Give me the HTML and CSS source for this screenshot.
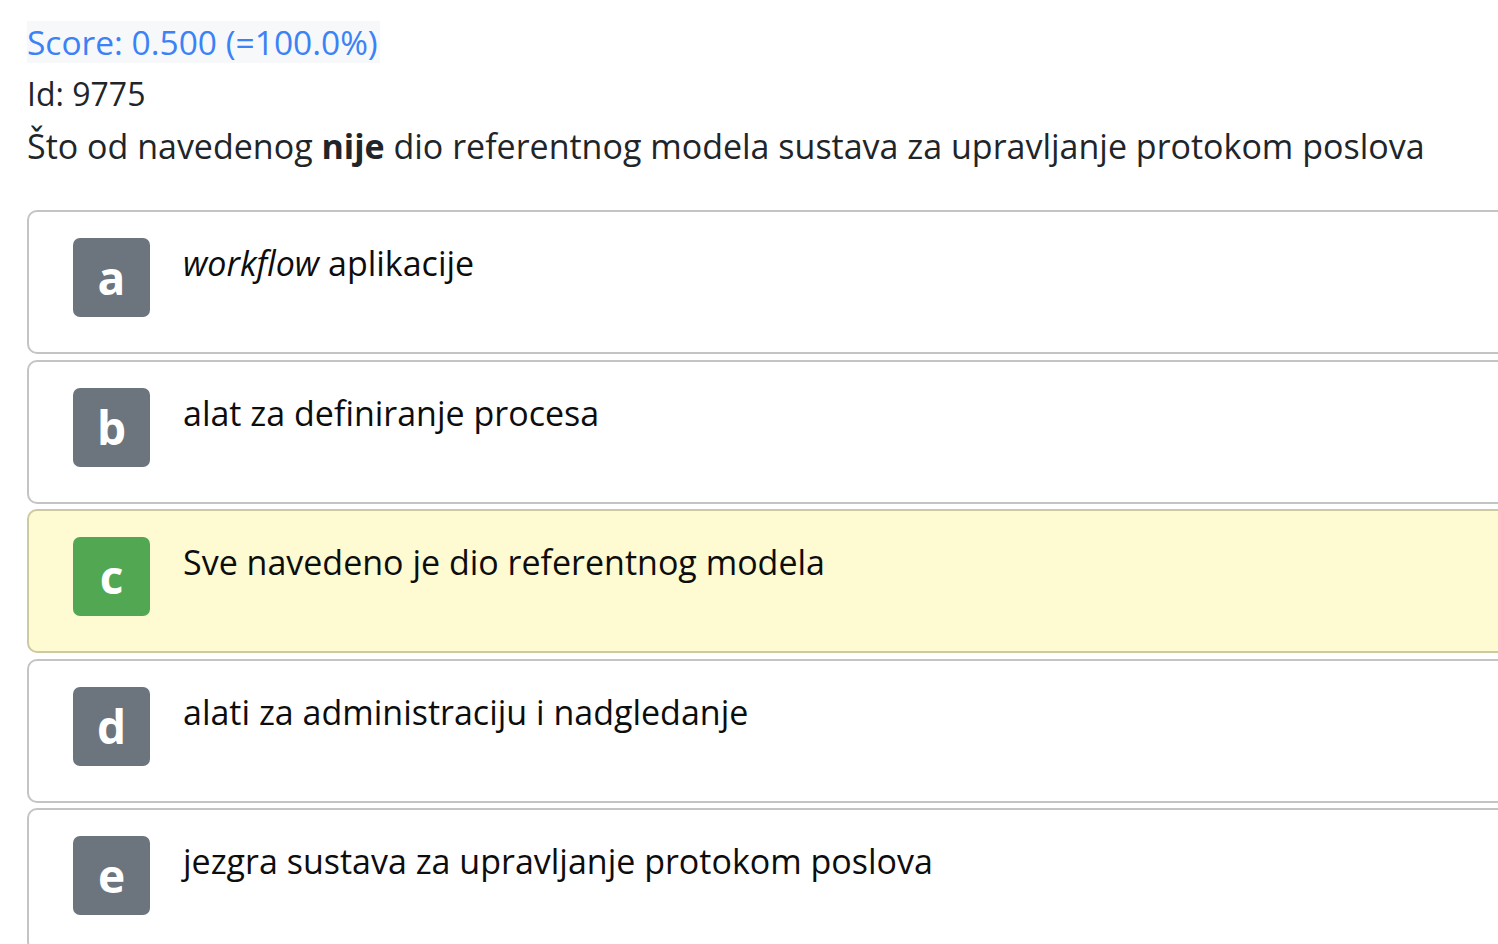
FILE: index.html
```html
<!DOCTYPE html>
<html lang="hr">
<head>
<meta charset="utf-8">
<title>Pitanje 9775</title>
<link rel="stylesheet" href="styles.css">
</head>
<body>
<main class="page">
  <div class="score">Score: 0.500 (=100.0%)</div>
  <div class="qid">Id: 9775</div>
  <div class="question">Što od navedenog <b>nije</b> dio referentnog modela sustava za upravljanje protokom poslova</div>
  <ul class="options">
    <li class="option"><span class="badge">a</span><span class="text"><i>workflow</i> aplikacije</span></li>
    <li class="option"><span class="badge">b</span><span class="text">alat za definiranje procesa</span></li>
    <li class="option option-correct"><span class="badge badge-correct">c</span><span class="text">Sve navedeno je dio referentnog modela</span></li>
    <li class="option"><span class="badge">d</span><span class="text">alati za administraciju i nadgledanje</span></li>
    <li class="option"><span class="badge">e</span><span class="text">jezgra sustava za upravljanje protokom poslova</span></li>
  </ul>
</main>
</body>
</html>
```
FILE: styles.css
```css
html, body {
  margin: 0;
  padding: 0;
  overflow: hidden;
  background: #fff;
}
body {
  font-family: "Open Sans", "Noto Sans", sans-serif;
  font-size: 34px;
  line-height: 52px;
  color: #212529;
}
.page {
  padding: 16px 0 0 27px;
}
.score {
  display: inline-block;
  background: #f6f8fa;
  color: #3b82f6;
  font-size: 33.5px;
  line-height: 42px;
  padding-right: 2px;
  margin-bottom: 5px;
}
.qid {
  line-height: 52px;
  font-size: 32px;
}
.question {
  line-height: 52px;
}
.question b { font-weight: 700; }
.options {
  list-style: none;
  margin: 38px -60px 0 0;
  padding: 0;
  display: flex;
  flex-direction: column;
  gap: 5.5px;
}
.option {
  display: flex;
  align-items: flex-start;
  gap: 33px;
  height: 144px;
  box-sizing: border-box;
  padding: 26px 0 0 44px;
  border: 2px solid #c4c4c4;
  border-radius: 10px;
  background: #fff;
  color: #0d0d0d;
}
.option-correct {
  background: #fefad1;
  border-color: #cdc9a0;
}
.badge {
  flex: none;
  width: 77px;
  height: 79px;
  border-radius: 7px;
  background: #6c757d;
  color: #fff;
  font-weight: 700;
  font-size: 46px;
  line-height: 79px;
  text-align: center;
}
.badge-correct { background: #52a852; }
.text {
  line-height: 52px;
  margin-top: -1px;
}
```
